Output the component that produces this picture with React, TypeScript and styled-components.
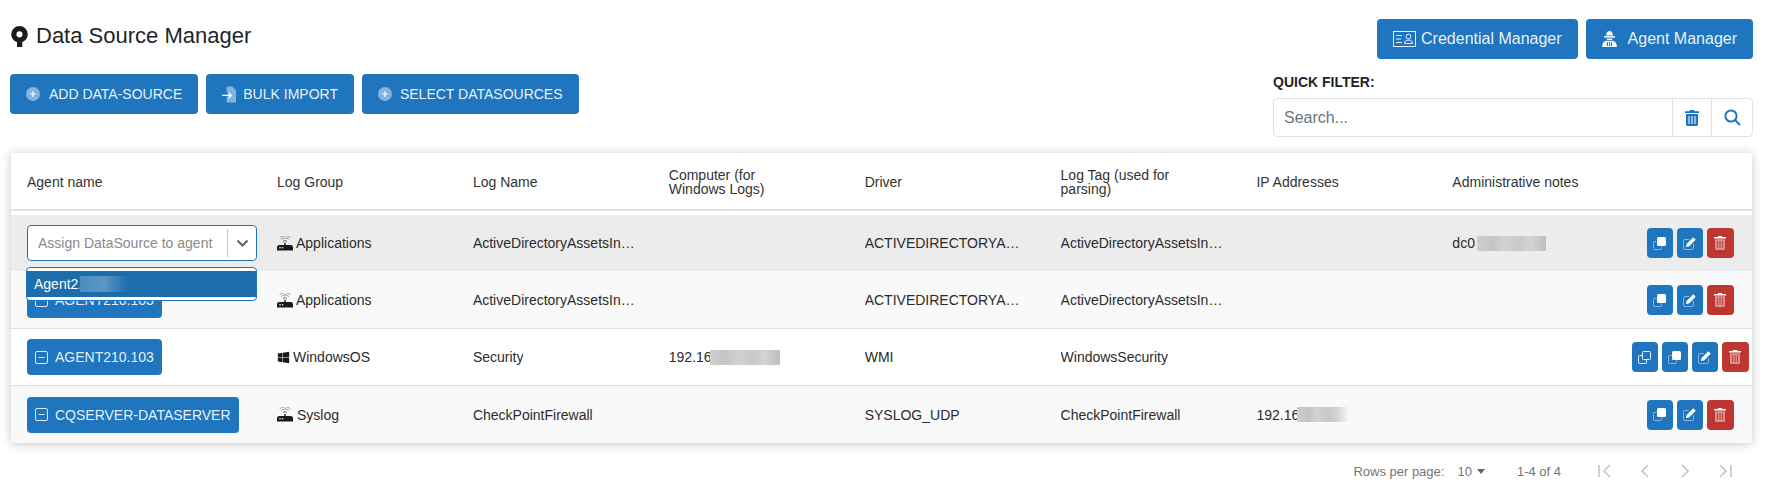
import styled, { createGlobalStyle } from "styled-components";
import { FaWindows } from "react-icons/fa";

const GlobalStyle = createGlobalStyle`
  html, body {
    margin: 0;
    background: #fff;
    color: #212529;
    font-family: "Liberation Sans", Arial, sans-serif;
    font-size: 14px;
  }
`;

const Page = styled.div`
  height: 485px;
  box-sizing: border-box;
  padding: 19px 18px 0 10px;
  overflow: hidden;
`;

const TopBar = styled.div`
  display: flex;
  justify-content: space-between;
  align-items: flex-start;
`;

const LeftColumn = styled.div`
  display: flex;
  flex-direction: column;
`;

const RightColumn = styled.div`
  width: 480px;
  display: flex;
  flex-direction: column;
`;

const Title = styled.h1`
  margin: 0 0 23px 1px;
  height: 32px;
  box-sizing: border-box;
  padding-top: 2px;
  display: flex;
  align-items: center;
  gap: 8px;
  font-size: 22px;
  font-weight: 400;
  color: #212529;
`;

const ButtonRow = styled.div<{ $end?: boolean }>`
  display: flex;
  gap: 8px;
  justify-content: ${(p) => (p.$end ? "flex-end" : "flex-start")};
`;

const Button = styled.button<{ $big?: boolean; $gap?: number }>`
  height: 40px;
  padding: 0 16px;
  display: flex;
  align-items: center;
  gap: ${(p) => p.$gap ?? 8}px;
  border: 0;
  border-radius: 4px;
  background: #2076be;
  color: rgba(255, 255, 255, 0.92);
  font-family: inherit;
  font-size: ${(p) => (p.$big ? 16 : 14)}px;
`;

const FilterLabel = styled.label`
  display: block;
  margin: 15px 0 8px;
  height: 16px;
  line-height: 16px;
  font-size: 14px;
  font-weight: 700;
  color: #212529;
`;

const FilterBox = styled.div`
  height: 39px;
  box-sizing: border-box;
  display: flex;
  border: 1px solid #dee2e6;
  border-radius: 4px;
  background: #fff;
`;

const SearchInput = styled.input`
  flex: 1;
  min-width: 0;
  border: 0;
  outline: 0;
  padding: 0 10px;
  background: transparent;
  font-family: inherit;
  font-size: 16px;
  &::placeholder {
    color: #6c757d;
    opacity: 1;
  }
`;

const FilterAddon = styled.div<{ $w: number }>`
  width: ${(p) => p.$w}px;
  display: flex;
  align-items: center;
  justify-content: center;
  border-left: 1px solid #dee2e6;
  color: #2076be;
`;

const Card = styled.div`
  margin: 16px 1px 0;
  background: #fff;
  box-shadow: 0 1px 10px rgba(0, 0, 0, 0.22);
`;

const GridRow = styled.div`
  display: grid;
  grid-template-columns: 250px repeat(7, 195.9px) 1fr;
`;

const HeadRow = styled(GridRow)`
  height: 58px;
  box-sizing: border-box;
  border-bottom: 2px solid #e0e0e0;
  margin-bottom: 4px;
`;

const HeadCell = styled.div`
  padding: 2px 16px 0;
  display: flex;
  align-items: center;
  line-height: 14px;
  color: #333;
`;

const Row = styled(GridRow)<{ $bg: string; $line?: string }>`
  height: 57px;
  box-sizing: border-box;
  background: ${(p) => p.$bg};
  border-bottom: ${(p) => (p.$line ? `1px solid ${p.$line}` : "0")};
`;

const Cell = styled.div`
  min-width: 0;
  padding: 0 16px;
  display: flex;
  align-items: center;
  color: #2b2b2b;
`;

const Clip = styled.span`
  overflow: hidden;
  white-space: nowrap;
  text-overflow: ellipsis;
`;

const IconText = styled.span<{ $gap: number }>`
  display: flex;
  align-items: center;
  gap: ${(p) => p.$gap}px;
`;

const Redacted = styled.span<{ $w: number; $fade?: boolean; $ml?: number }>`
  display: inline-block;
  flex: none;
  width: ${(p) => p.$w}px;
  height: 15px;
  margin-left: ${(p) => p.$ml ?? -2}px;
  background: linear-gradient(
    90deg,
    #cfcfcf 0%,
    #c4c4c4 22%,
    #d2d2d2 40%,
    #c8c8c8 62%,
    #d4d4d4 78%,
    ${(p) => (p.$fade ? "#f4f4f4" : "#bdbdbd")} 100%
  );
`;

const AgentTag = styled.button`
  height: 36px;
  padding: 0 8px;
  display: flex;
  align-items: center;
  gap: 7px;
  border: 0;
  border-radius: 4px;
  background: #2076be;
  color: rgba(255, 255, 255, 0.9);
  font-family: inherit;
  font-size: 14px;
  white-space: nowrap;
`;

const SelectWrap = styled.div`
  position: relative;
  flex: none;
  width: 230px;
  height: 36px;
  box-sizing: border-box;
  display: flex;
  align-items: center;
  border: 1px solid #2076be;
  border-radius: 4px;
  background: #fff;
`;

const Placeholder = styled.span`
  flex: 1;
  padding-left: 10px;
  color: #8a8a8a;
  white-space: nowrap;
`;

const SelectDivider = styled.span`
  width: 1px;
  height: 28px;
  background: #c8c8c8;
`;

const ChevronBox = styled.span`
  width: 28px;
  display: flex;
  justify-content: center;
  color: #666;
`;

const Menu = styled.div`
  position: absolute;
  z-index: 2;
  top: 41px;
  left: -2px;
  width: 231px;
  box-sizing: border-box;
  padding: 3px 0 3px;
  border: 1px solid #2076be;
  border-radius: 4px;
  background: #fff;
`;

const MenuOption = styled.div`
  height: 26px;
  padding-left: 7px;
  display: flex;
  align-items: center;
  background: #1e6dab;
  color: #fff;
`;

const MenuBlur = styled.span`
  width: 48px;
  height: 16px;
  margin-left: -2px;
  background: linear-gradient(90deg, #4a8dc1, #5a97c6 50%, #2f7ab4 85%, #1e6dab);
`;

const Actions = styled.div`
  min-width: 0;
  padding-right: 4px;
  display: flex;
  align-items: center;
  justify-content: center;
  gap: 4px;
`;

const ActionButton = styled.button<{ $danger?: boolean }>`
  flex: none;
  width: ${(p) => (p.$danger ? 27 : 26)}px;
  height: 30px;
  padding: 0;
  display: flex;
  align-items: center;
  justify-content: center;
  border: 0;
  border-radius: 4px;
  background: ${(p) => (p.$danger ? "#bd3632" : "#2076be")};
`;

const Pagination = styled.div`
  height: 56px;
  padding-right: 19px;
  display: flex;
  align-items: center;
  justify-content: flex-end;
  font-size: 13px;
  color: #757575;
`;

const RowsLabel = styled.span`
  margin-right: 13px;
`;

const RowsValue = styled.span`
  display: flex;
  align-items: center;
  gap: 5px;
  margin-right: 32px;
`;

const Caret = styled.span`
  width: 0;
  height: 0;
  border-left: 4.5px solid transparent;
  border-right: 4.5px solid transparent;
  border-top: 5px solid #666;
`;

const PageRange = styled.span`
  margin-right: 35px;
`;

const PageIcons = styled.span`
  display: flex;
  gap: 22px;
`;

function PinIcon() {
  return (
    <svg width="17" height="21" viewBox="0 0 17 21">
      <path
        fillRule="evenodd"
        fill="#1c1c1c"
        d="M8.5 0a8.3 8.3 0 0 1 8.3 8.3c0 3.6-2.3 6.6-5.5 7.8V21H6v-4.9C2.6 15 .2 11.9.2 8.3A8.3 8.3 0 0 1 8.5 0zm0 5.2a3.1 3.1 0 1 0 0 6.2 3.1 3.1 0 0 0 0-6.2z"
      />
    </svg>
  );
}

function PlusCircleIcon() {
  return (
    <svg width="14" height="14" viewBox="0 0 14 14">
      <circle cx="7" cy="7" r="7" fill="#fff" opacity="0.45" />
      <path d="M7 4v6M4 7h6" stroke="#fff" strokeWidth="1.2" />
    </svg>
  );
}

function ImportIcon() {
  return (
    <svg width="14" height="17" viewBox="0 0 15 17">
      <path d="M5 0h6l4 4v13H5v-6h1V6H5z" fill="#fff" opacity="0.45" />
      <path d="M0 9.5h10M7 6.5l3 3-3 3" fill="none" stroke="#fff" strokeWidth="1.3" />
    </svg>
  );
}

function CredentialIcon() {
  return (
    <svg width="23" height="16" viewBox="0 0 23 16" fill="none" stroke="#fff" strokeOpacity="0.88">
      <rect x="0.5" y="0.5" width="22" height="15" />
      <path d="M3 4.5h6M3 8h5M3 11.5h6" />
      <circle cx="15.5" cy="5.6" r="2.4" />
      <path d="M11.5 12.5c0-2.2 1.6-3.4 4-3.4s4 1.2 4 3.4z" />
    </svg>
  );
}

function AgentIcon() {
  return (
    <svg width="15" height="16" viewBox="0 0 15 16" fill="#fff" fillOpacity="0.92">
      <path d="M4 4.5C4 1.8 5.5 0 7.5 0S11 1.8 11 4.5z" />
      <rect x="2" y="5" width="11" height="1.6" />
      <path d="M4.4 7.4h6.2l-.6 1.7H5z" />
      <path
        fillRule="evenodd"
        d="M0 16c0-3.4 1.6-5.6 4-6.2h7c2.4.6 4 2.8 4 6.2zM5 11.2V15h1v-3.8zm2 0V15h1v-3.8zm2 0V15h1v-3.8z"
      />
    </svg>
  );
}

function BinIcon() {
  return (
    <svg width="14" height="16" viewBox="0 0 14 16" fill="#2076be">
      <path d="M5 0h4l.7 1.2H14v1.7H0V1.2h4.300z" />
      <path
        fillRule="evenodd"
        d="M1 4h12v10.500A1.500 1.500 0 0 1 11.500 16h-9A1.500 1.500 0 0 1 1 14.500zM3.500 6v8h1V6zm3 0v8h1V6zm3 0v8h1V6z"
      />
    </svg>
  );
}

function SearchIcon() {
  return (
    <svg width="17" height="17" viewBox="0 0 17 17" fill="none" stroke="#2076be" strokeWidth="2">
      <circle cx="7" cy="7" r="5.6" />
      <path d="M11 11l5 5" />
    </svg>
  );
}

function ChevronDown() {
  return (
    <svg width="13" height="9" viewBox="0 0 13 9" fill="none" stroke="#666" strokeWidth="2.2">
      <path d="M1.500 1.500l5 5 5-5" />
    </svg>
  );
}

function MinusSquareIcon() {
  return (
    <svg width="13" height="13" viewBox="0 0 13 13" fill="none" stroke="#fff" strokeOpacity="0.85">
      <rect x="0.5" y="0.5" width="12" height="12" rx="1.500" />
      <path d="M3.500 6.500h6" />
    </svg>
  );
}

function RouterIcon() {
  return (
    <svg width="16" height="15" viewBox="0 0 16 15">
      <path d="M4.200 3.600a5.200 5.200 0 0 1 7.600 0M2.600 1.900a7.600 7.600 0 0 1 10.800 0" fill="none" stroke="#9a9a9a" strokeWidth="1" />
      <path d="M6 5.500a2.800 2.800 0 0 1 4 0" fill="none" stroke="#666" strokeWidth="1" />
      <path d="M7.300 6.800h1.400v2.200h4.800c1.400 0 2.500.8 2.500 2.300V14.500H0v-3.200c0-1.500 1.100-2.300 2.500-2.300h4.800z" fill="#1a1a1a" />
      <circle cx="3" cy="11.800" r="0.8" fill="#fff" />
      <circle cx="5.500" cy="11.800" r="0.8" fill="#fff" />
    </svg>
  );
}

function CopyOutlineIcon() {
  return (
    <svg width="13" height="13" viewBox="0 0 13 13" fill="none" stroke="#fff" strokeOpacity="0.9">
      <rect x="4.500" y="0.500" width="8" height="8" rx="1" />
      <path d="M4 4.500H1.500a1 1 0 0 0-1 1v6a1 1 0 0 0 1 1h6a1 1 0 0 0 1-1V9" />
    </svg>
  );
}

function CopySolidIcon() {
  return (
    <svg width="13" height="13" viewBox="0 0 13 13">
      <path d="M3.500 4.500h-2a1 1 0 0 0-1 1v6a1 1 0 0 0 1 1h6a1 1 0 0 0 1-1v-2" fill="none" stroke="#fff" strokeOpacity="0.45" />
      <rect x="4" y="0" width="9" height="9" rx="1.500" fill="#fff" />
    </svg>
  );
}

function EditIcon() {
  return (
    <svg width="13" height="13" viewBox="0 0 13 13">
      <path d="M6 2.500H2A1.500 1.500 0 0 0 .5 4v7A1.500 1.500 0 0 0 2 12.500h7a1.500 1.500 0 0 0 1.500-1.500V7" fill="none" stroke="#fff" strokeOpacity="0.45" />
      <path d="M10.300.3l2.400 2.400-6.700 6.700-3 .6.600-3z" fill="#fff" />
    </svg>
  );
}

function TrashDuoIcon() {
  return (
    <svg width="12" height="14" viewBox="0 0 12 14" fill="#fff">
      <path d="M4.200 0h3.600l.6 1H12v1.500H0V1h3.600z" />
      <path
        fillRule="evenodd"
        opacity="0.45"
        d="M1 3.300h10v9.400A1.300 1.300 0 0 1 9.700 14H2.300A1.300 1.300 0 0 1 1 12.700zM3.200 5v7h.9V5zm2.400 0v7h.9V5zm2.400 0v7h.9V5z"
      />
    </svg>
  );
}

function PagerIcon({ d }: { d: string }) {
  return (
    <svg width="18" height="14" viewBox="0 0 18 14" fill="none" stroke="#c4c4c4" strokeWidth="1.600">
      <path d={d} />
    </svg>
  );
}

function ActionGroup({ clone }: { clone?: boolean }) {
  return (
    <Actions>
      {clone && (
        <ActionButton>
          <CopyOutlineIcon />
        </ActionButton>
      )}
      <ActionButton>
        <CopySolidIcon />
      </ActionButton>
      <ActionButton>
        <EditIcon />
      </ActionButton>
      <ActionButton $danger>
        <TrashDuoIcon />
      </ActionButton>
    </Actions>
  );
}

const columns = [
  "Agent name",
  "Log Group",
  "Log Name",
  <>Computer (for<br />Windows Logs)</>,
  "Driver",
  <>Log Tag (used for<br />parsing)</>,
  "IP Addresses",
  "Administrative notes",
  "",
];

function Agent({ name }: { name: string }) {
  return (
    <AgentTag>
      <MinusSquareIcon />
      {name}
    </AgentTag>
  );
}

function App() {
  return (
    <Page>
      <GlobalStyle />
      <TopBar>
        <LeftColumn>
          <Title>
            <PinIcon />
            Data Source Manager
          </Title>
          <ButtonRow>
            <Button $gap={9}>
              <PlusCircleIcon />
              ADD DATA-SOURCE
            </Button>
            <Button $gap={7}>
              <ImportIcon />
              BULK IMPORT
            </Button>
            <Button>
              <PlusCircleIcon />
              SELECT DATASOURCES
            </Button>
          </ButtonRow>
        </LeftColumn>
        <RightColumn>
          <ButtonRow $end>
            <Button $big $gap={5}>
              <CredentialIcon />
              Credential Manager
            </Button>
            <Button $big $gap={11}>
              <AgentIcon />
              Agent Manager
            </Button>
          </ButtonRow>
          <FilterLabel>QUICK FILTER:</FilterLabel>
          <FilterBox>
            <SearchInput placeholder="Search..." />
            <FilterAddon $w={38}>
              <BinIcon />
            </FilterAddon>
            <FilterAddon $w={40}>
              <SearchIcon />
            </FilterAddon>
          </FilterBox>
        </RightColumn>
      </TopBar>

      <Card>
        <HeadRow>
          {columns.map((col, i) => (
            <HeadCell key={i}>{col}</HeadCell>
          ))}
        </HeadRow>

        <Row $bg="#ececec" $line="#f9f9f9">
          <Cell>
            <SelectWrap>
              <Placeholder>Assign DataSource to agent</Placeholder>
              <SelectDivider />
              <ChevronBox>
                <ChevronDown />
              </ChevronBox>
              <Menu>
                <MenuOption>
                  Agent2.
                  <MenuBlur />
                </MenuOption>
              </Menu>
            </SelectWrap>
          </Cell>
          <Cell>
            <IconText $gap={3}>
              <RouterIcon />
              Applications
            </IconText>
          </Cell>
          <Cell><Clip>ActiveDirectoryAssetsInventory</Clip></Cell>
          <Cell />
          <Cell><Clip>ACTIVEDIRECTORYASSETS</Clip></Cell>
          <Cell><Clip>ActiveDirectoryAssetsInventory</Clip></Cell>
          <Cell />
          <Cell>
            dc0
            <Redacted $w={69} $ml={2} />
          </Cell>
          <ActionGroup />
        </Row>

        <Row $bg="#f9f9f9" $line="#dedede">
          <Cell>
            <Agent name="AGENT210.103" />
          </Cell>
          <Cell>
            <IconText $gap={3}>
              <RouterIcon />
              Applications
            </IconText>
          </Cell>
          <Cell><Clip>ActiveDirectoryAssetsInventory</Clip></Cell>
          <Cell />
          <Cell><Clip>ACTIVEDIRECTORYASSETS</Clip></Cell>
          <Cell><Clip>ActiveDirectoryAssetsInventory</Clip></Cell>
          <Cell />
          <Cell />
          <ActionGroup />
        </Row>

        <Row $bg="#fff" $line="#dedede">
          <Cell>
            <Agent name="AGENT210.103" />
          </Cell>
          <Cell>
            <IconText $gap={3}>
              <FaWindows size={13} color="#1a1a1a" />
              WindowsOS
            </IconText>
          </Cell>
          <Cell><Clip>Security</Clip></Cell>
          <Cell>
            192.16
            <Redacted $w={70} />
          </Cell>
          <Cell><Clip>WMI</Clip></Cell>
          <Cell><Clip>WindowsSecurity</Clip></Cell>
          <Cell />
          <Cell />
          <ActionGroup clone />
        </Row>

        <Row $bg="#f9f9f9">
          <Cell>
            <Agent name="CQSERVER-DATASERVER" />
          </Cell>
          <Cell>
            <IconText $gap={4}>
              <RouterIcon />
              Syslog
            </IconText>
          </Cell>
          <Cell><Clip>CheckPointFirewall</Clip></Cell>
          <Cell />
          <Cell><Clip>SYSLOG_UDP</Clip></Cell>
          <Cell><Clip>CheckPointFirewall</Clip></Cell>
          <Cell>
            192.16
            <Redacted $w={51} $fade />
          </Cell>
          <Cell />
          <ActionGroup />
        </Row>
      </Card>

      <Pagination>
        <RowsLabel>Rows per page:</RowsLabel>
        <RowsValue>
          10
          <Caret />
        </RowsValue>
        <PageRange>1-4 of 4</PageRange>
        <PageIcons>
          <PagerIcon d="M3 1v12M14 1L8 7l6 6" />
          <PagerIcon d="M12 1L6 7l6 6" />
          <PagerIcon d="M6 1l6 6-6 6" />
          <PagerIcon d="M4 1l6 6-6 6M15 1v12" />
        </PageIcons>
      </Pagination>
    </Page>
  );
}

export default App;
